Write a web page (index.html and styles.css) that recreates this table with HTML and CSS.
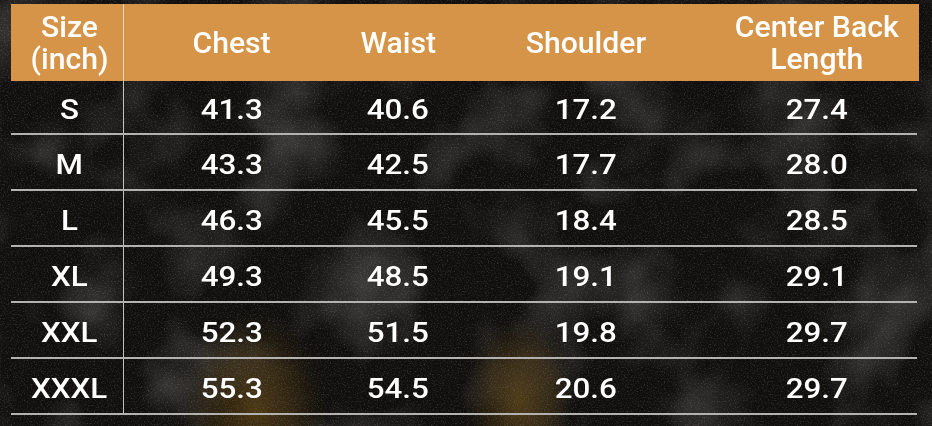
FILE: index.html
```html
<!DOCTYPE html>
<html lang="en">
<head>
<meta charset="utf-8">
<title>Size Chart</title>
<link rel="stylesheet" href="styles.css">
</head>
<body>
<div class="page">
  <svg class="backdrop" width="932" height="426" viewBox="0 0 932 426" aria-hidden="true">
    <defs>
      <filter id="grain" x="0" y="0" width="100%" height="100%">
        <feTurbulence type="fractalNoise" baseFrequency="0.7" numOctaves="2" seed="7"/>
        <feColorMatrix values="0 0 0 0 0.42  0 0 0 0 0.4  0 0 0 0 0.37  1.0 0 0 0 -0.5"/>
      </filter>
      <filter id="blot" x="0" y="0" width="100%" height="100%">
        <feTurbulence type="fractalNoise" baseFrequency="0.012" numOctaves="3" seed="4"/>
        <feColorMatrix values="0 0 0 0 0.18  0 0 0 0 0.17  0 0 0 0 0.16  1.0 0 0 0 -0.45"/>
      </filter>
      <radialGradient id="y1" cx="0.5" cy="0.5" r="0.5">
        <stop offset="0" stop-color="#533c13" stop-opacity="0.85"/>
        <stop offset="0.6" stop-color="#402e0e" stop-opacity="0.5"/>
        <stop offset="1" stop-color="#2e210a" stop-opacity="0"/>
      </radialGradient>
    </defs>
    <rect width="932" height="426" fill="#100f0e"/>
    <rect width="932" height="426" filter="url(#blot)"/>
    <ellipse cx="255" cy="410" rx="72" ry="100" fill="url(#y1)"/>
    <ellipse cx="520" cy="400" rx="55" ry="85" fill="url(#y1)"/>
    <rect width="932" height="426" filter="url(#grain)" opacity="0.65"/>
  </svg>

  <div class="chart">
    <div class="row head">
      <div class="cell first"><span>Size<br>(inch)</span></div>
      <div class="cell"><span>Chest</span></div>
      <div class="cell"><span>Waist</span></div>
      <div class="cell"><span>Shoulder</span></div>
      <div class="cell"><span>Center Back<br>Length</span></div>
    </div>
    <div class="row data short">
      <div class="cell first"><span>S</span></div><div class="cell"><span>41.3</span></div><div class="cell"><span>40.6</span></div><div class="cell"><span>17.2</span></div><div class="cell"><span>27.4</span></div>
    </div>
    <div class="row data">
      <div class="cell first"><span>M</span></div><div class="cell"><span>43.3</span></div><div class="cell"><span>42.5</span></div><div class="cell"><span>17.7</span></div><div class="cell"><span>28.0</span></div>
    </div>
    <div class="row data">
      <div class="cell first"><span>L</span></div><div class="cell"><span>46.3</span></div><div class="cell"><span>45.5</span></div><div class="cell"><span>18.4</span></div><div class="cell"><span>28.5</span></div>
    </div>
    <div class="row data">
      <div class="cell first"><span>XL</span></div><div class="cell"><span>49.3</span></div><div class="cell"><span>48.5</span></div><div class="cell"><span>19.1</span></div><div class="cell"><span>29.1</span></div>
    </div>
    <div class="row data">
      <div class="cell first"><span>XXL</span></div><div class="cell"><span>52.3</span></div><div class="cell"><span>51.5</span></div><div class="cell"><span>19.8</span></div><div class="cell"><span>29.7</span></div>
    </div>
    <div class="row data">
      <div class="cell first"><span>XXXL</span></div><div class="cell"><span>55.3</span></div><div class="cell"><span>54.5</span></div><div class="cell"><span>20.6</span></div><div class="cell"><span>29.7</span></div>
    </div>
  </div>
</div>
</body>
</html>
```
FILE: styles.css
```css
* { box-sizing: border-box; }
html, body {
  margin: 0;
  padding: 0;
  background: #100f0e;
}
.page {
  position: relative;
  width: 932px;
  height: 426px;
  overflow: hidden;
  font-family: Roboto, "Liberation Sans", sans-serif;
  font-weight: 500;
  color: #ffffff;
}
.backdrop {
  position: absolute;
  left: 0;
  top: 0;
  z-index: 0;
}
.chart {
  position: relative;
  z-index: 1;
  margin: 4px 0 0 11px;
  width: 908px;
  display: flex;
  flex-direction: column;
}
.row {
  display: grid;
  grid-template-columns: 113px 216px 116px 259px 204px;
}
.head {
  height: 77px;
  background: #d59448;
  font-size: 29px;
  line-height: 32px;
}
.data {
  height: 56px;
  margin-right: 2px;
  border-bottom: 2px solid #b4b2ae;
  font-size: 28px;
}
.data.short {
  height: 54px;
}
.cell {
  display: flex;
  align-items: center;
  justify-content: center;
  text-align: center;
}
.cell span {
  display: inline-block;
}
.head .cell span {
  transform: scaleX(1.04);
}
.data .cell {
  padding-top: 4px;
}
.data .cell span {
  transform: scaleX(1.12);
}
.first {
  padding-left: 5px;
  border-right: 1px solid rgba(225, 222, 215, 0.85);
}
```
